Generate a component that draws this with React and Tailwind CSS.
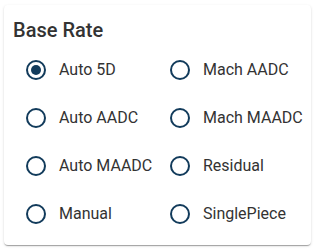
const options = [
  { label: 'Auto 5D', checked: true },
  { label: 'Mach AADC' },
  { label: 'Auto AADC' },
  { label: 'Mach MAADC' },
  { label: 'Auto MAADC' },
  { label: 'Residual' },
  { label: 'Manual' },
  { label: 'SinglePiece' },
]

function RadioIcon({ checked }) {
  return (
    <svg viewBox="0 0 24 24" className="w-6 h-6 shrink-0 text-[#123b5b]">
      <circle cx="12" cy="12" r="9" fill="none" stroke="currentColor" strokeWidth="2" />
      {checked && <circle cx="12" cy="12" r="5" fill="currentColor" />}
    </svg>
  )
}

export default function App() {
  return (
    <div className="w-[316px] h-[251px] bg-white pt-[5px] pl-[4px] font-['Roboto',sans-serif]">
      <div className="w-[307px] h-[240px] bg-white rounded-[4px] shadow-[0px_2px_1px_-1px_rgba(0,0,0,0.2),0px_1px_1px_0px_rgba(0,0,0,0.14),0px_1px_3px_0px_rgba(0,0,0,0.12)] pt-[13px]">
        <h2 className="pl-[9px] text-[20px] leading-[24px] font-medium text-[#333]">Base Rate</h2>
        <div className="mt-[4px] pl-[20px] grid grid-cols-[144px_1fr]">
          {options.map((o) => (
            <label key={o.label} className="h-[48px] flex items-center">
              <RadioIcon checked={o.checked} />
              <span className="ml-[11px] text-[16px] text-[#333] whitespace-nowrap">{o.label}</span>
            </label>
          ))}
        </div>
      </div>
    </div>
  )
}
